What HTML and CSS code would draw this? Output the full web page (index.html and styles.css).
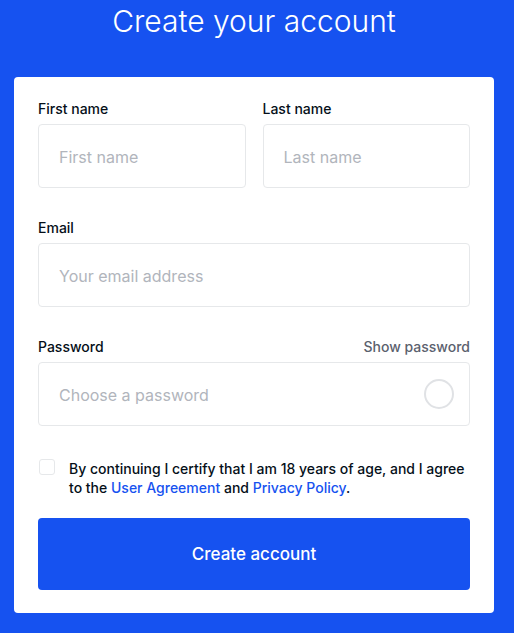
FILE: index.html
```html
<!DOCTYPE html>
<html lang="en">
<head>
    <meta charset="UTF-8">
    <meta name="viewport" content="width=device-width, initial-scale=1.0">
    <title>Create your account</title>
    <link rel="stylesheet" href="styles.css">
</head>
<body>

    <div class="page">
        <h1>Create your account</h1>

        <div class="card">
            <!-- Name row -->
            <div class="row">
                <div class="field">
                    <label for="firstName">First name</label>
                    <input type="text" id="firstName" placeholder="First name" />
                </div>
                <div class="field">
                    <label for="lastName">Last name</label>
                    <input type="text" id="lastName" placeholder="Last name" />
                </div>
            </div>

            <div class="field">
                <label for="email">Email</label>
                <input type="text" id="email" placeholder="Your email address" />
            </div>

            <div class="field">
                <div class="label-row">
                    <label for="password">Password</label>
                    <span class="show-link">Show password</span>
                </div>
                <div class="password-box">
                    <input type="password" id="password" placeholder="Choose a password" />
                    <span class="strength"></span>
                </div>
            </div>

            <div class="terms">
                <input type="checkbox" id="terms" />
                <label for="terms">By continuing I certify that I am 18 years of age, and I agree to the <a href="#">User Agreement</a> and <a href="#">Privacy Policy</a>.</label>
            </div>

            <button>Create account</button>
        </div>
    </div>

</body>
</html>
```

FILE: styles.css
```css
* {
    margin: 0;
    padding: 0;
    box-sizing: border-box;
}

body {
    font-family: 'Inter', 'Roboto', sans-serif;
    background-color: #1652f0;
    color: #050f19;
}

.page {
    padding: 0 20px 20px 14px;
}

h1 {
    font-size: 30px;
    font-weight: 300;
    line-height: 40px;
    padding-top: 1px;
    margin-bottom: 36px;
    text-align: center;
    color: white;
}

.card {
    width: 480px;
    background-color: white;
    border-radius: 4px;
    padding: 22px 24px 23px;
}

.row {
    display: grid;
    grid-template-columns: 1fr 1fr;
    gap: 17px;
}

.field {
    margin-bottom: 30px;
}

label {
    display: block;
    font-size: 14px;
    font-weight: 500;
    line-height: 20px;
    margin-bottom: 5px;
}

.label-row {
    display: flex;
    justify-content: space-between;
    align-items: baseline;
}

.show-link {
    font-size: 14px;
    font-weight: 500;
    line-height: 20px;
    color: #5b616e;
    cursor: pointer;
}

input[type="text"], input[type="password"] {
    width: 100%;
    height: 64px;
    padding: 2px 20px 0;
    font-family: inherit;
    font-size: 16px;
    color: #050f19;
    border: 1px solid #e6e8ea;
    border-radius: 4px;
    outline: none;
    background-color: white;
}

input::placeholder {
    color: #b1b5bc;
}

.password-box {
    position: relative;
}

.strength {
    position: absolute;
    right: 16px;
    top: 17px;
    width: 30px;
    height: 30px;
    border: 2px solid #e0e2e5;
    border-radius: 50%;
}

.terms {
    display: flex;
    align-items: flex-start;
    gap: 14px;
    padding-top: 3px;
    margin-bottom: 21px;
}

.terms input {
    appearance: none;
    flex-shrink: 0;
    width: 16px;
    height: 16px;
    margin: 0 0 0 1px;
    border: 1px solid #e6e8ea;
    border-radius: 3px;
}

.terms label {
    font-size: 14px;
    font-weight: 500;
    line-height: 19px;
    margin: 0;
}

.terms a {
    color: #1652f0;
    text-decoration: none;
}

button {
    width: 100%;
    height: 72px;
    font-family: inherit;
    font-size: 17px;
    font-weight: 500;
    color: white;
    background-color: #1652f0;
    border: none;
    border-radius: 4px;
    cursor: pointer;
}
```
